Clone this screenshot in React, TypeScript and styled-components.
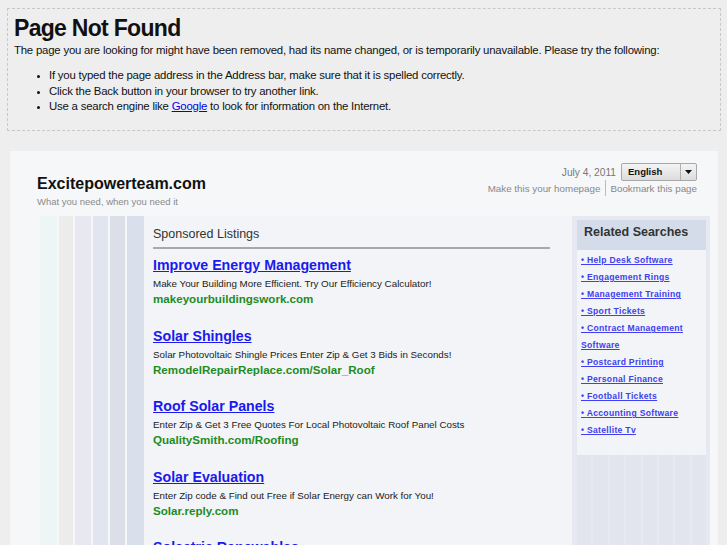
import React from "react";
import styled, { createGlobalStyle } from "styled-components";

const Global = createGlobalStyle`
  html, body { margin: 0; padding: 0; }
  body {
    background: #eeeeee;
    font-family: "Liberation Sans", Arial, sans-serif;
    width: 727px;
    height: 545px;
    overflow: hidden;
  }
`;

const Page = styled.div`
  padding: 8px 6px 0 7px;
`;

const ErrorBox = styled.div`
  border: 1px dashed #c8c8c8;
  padding: 5px 6px 12px 6px;
  height: 104px;
  color: #111;
`;

const ErrorTitle = styled.h1`
  margin: 0;
  font-size: 23px;
  font-weight: bold;
  letter-spacing: -0.7px;
  line-height: 28px;
`;

const ErrorText = styled.p`
  margin: 0;
  font-size: 11.4px;
  letter-spacing: -0.21px;
  line-height: 17px;
`;

const ErrorList = styled.ul`
  margin: 9px 0 0 0;
  padding-left: 35px;
  font-size: 11.4px;
  letter-spacing: -0.21px;
  line-height: 15.5px;
  li::marker { font-size: 9px; }
  a { color: #0000ee; }
`;

const Panel = styled.div`
  margin: 20px 3px 0 3px;
  background: #f6f7f9;
  height: 400px;
`;

const Header = styled.div`
  display: flex;
  justify-content: space-between;
  padding: 12px 21px 0 27px;
  height: 53px;
`;

const Brand = styled.div`
  padding-top: 10px;
`;

const SiteName = styled.div`
  font-size: 16px;
  font-weight: bold;
  color: #111;
  line-height: 22px;
`;

const Tagline = styled.div`
  font-size: 9.5px;
  color: #8a8a8a;
  line-height: 14px;
`;

const Tools = styled.div`
  display: flex;
  flex-direction: column;
  align-items: flex-end;
`;

const DateRow = styled.div`
  display: flex;
  align-items: center;
  gap: 5px;
  font-size: 10.2px;
  color: #777;
`;

const Select = styled.div`
  display: flex;
  width: 74px;
  height: 16px;
  border: 1px solid #a8a8a8;
  border-radius: 2px;
  background: linear-gradient(#f4f4f4, #dcdcdc);
  font-size: 9.5px;
  font-weight: bold;
  color: #111;
`;

const SelectLabel = styled.span`
  flex: 1;
  padding-left: 6px;
  line-height: 16px;
  border-right: 1px solid #b0b0b0;
`;

const SelectArrow = styled.span`
  width: 15px;
  display: flex;
  align-items: center;
  justify-content: center;
`;

const LinkRow = styled.div`
  display: flex;
  align-items: center;
  font-size: 9.8px;
  color: #888;
  margin-top: -1px;
`;

const Divider = styled.span`
  width: 1px;
  height: 16px;
  background: #bbb;
  margin: 0 4px 0 5px;
`;

const Body = styled.div`
  display: flex;
  height: 330px;
  padding: 0 8px 0 30px;
`;

const Stripes = styled.div`
  display: flex;
  width: 104px;
  gap: 2px;
`;

const Stripe = styled.div<{ $c: string; $w: number }>`
  width: ${(p) => p.$w}px;
  background: ${(p) => p.$c};
`;

const Main = styled.div`
  flex: 1;
  background: #f2f4f7;
  padding: 10px 22px 0 9px;
`;

const SectionTitle = styled.div`
  font-size: 12.5px;
  color: #333;
  line-height: 16px;
  padding-bottom: 5px;
  border-bottom: 2px solid #a8a8a8;
`;

const Listing = styled.div`
  margin-top: 7px;
  height: 63.5px;
`;

const AdTitle = styled.a`
  display: inline-block;
  font-size: 14.2px;
  font-weight: bold;
  color: #1a1aee;
  text-decoration: underline;
  line-height: 18px;
`;

const AdDesc = styled.div`
  font-size: 9.8px;
  color: #222;
  line-height: 16px;
  padding-top: 2px;
`;

const AdUrl = styled.div`
  font-size: 11.6px;
  font-weight: bold;
  color: #1e8c1e;
  line-height: 14px;
`;

const Sidebar = styled.div`
  width: 138px;
  background: #e6e9f1;
  padding: 4px 4px 0 5px;
  box-sizing: border-box;
  display: flex;
  flex-direction: column;
`;

const SideHead = styled.div`
  background: #d4dcea;
  height: 30px;
  padding-left: 7px;
  font-size: 12.5px;
  font-weight: bold;
  color: #333;
  line-height: 24px;
`;

const SideList = styled.div`
  background: #f2f4f8;
  padding: 2px 0 16px 4px;
  height: 187px;
`;

const SideLink = styled.a`
  display: block;
  font-size: 8.6px;
  font-weight: bold;
  color: #4040ee;
  text-decoration: underline;
  line-height: 17px;
  letter-spacing: 0.3px;
`;

const SideStripes = styled.div`
  flex: 1;
  display: flex;
  gap: 2px;
`;

const SideStripe = styled.div`
  flex: 1;
  background: #e2e5ee;
`;

const ads = [
  {
    t: "Improve Energy Management",
    d: "Make Your Building More Efficient. Try Our Efficiency Calculator!",
    u: "makeyourbuildingswork.com",
  },
  {
    t: "Solar Shingles",
    d: "Solar Photovoltaic Shingle Prices Enter Zip & Get 3 Bids in Seconds!",
    u: "RemodelRepairReplace.com/Solar_Roof",
  },
  {
    t: "Roof Solar Panels",
    d: "Enter Zip & Get 3 Free Quotes For Local Photovoltaic Roof Panel Costs",
    u: "QualitySmith.com/Roofing",
  },
  {
    t: "Solar Evaluation",
    d: "Enter Zip code & Find out Free if Solar Energy can Work for You!",
    u: "Solar.reply.com",
  },
  {
    t: "Solectric Renewables",
    d: "Solar Energy Systems for Homes and Businesses.",
    u: "www.solectric.com",
  },
];

const related = [
  "Help Desk Software",
  "Engagement Rings",
  "Management Training",
  "Sport Tickets",
  "Contract Management Software",
  "Postcard Printing",
  "Personal Finance",
  "Football Tickets",
  "Accounting Software",
  "Satellite Tv",
];

const stripes: [string, number][] = [
  ["#eef5f5", 17],
  ["#ececea", 15],
  ["#e8e8f2", 16],
  ["#e1e5ef", 15],
  ["#dcdee8", 16],
  ["#d9e0eb", 17],
];

export default function App() {
  return (
    <>
      <Global />
      <Page>
        <ErrorBox>
          <ErrorTitle>Page Not Found</ErrorTitle>
          <ErrorText>
            The page you are looking for might have been removed, had its name changed, or is
            temporarily unavailable. Please try the following:
          </ErrorText>
          <ErrorList>
            <li>If you typed the page address in the Address bar, make sure that it is spelled correctly.</li>
            <li>Click the Back button in your browser to try another link.</li>
            <li>
              Use a search engine like <a href="#">Google</a> to look for information on the Internet.
            </li>
          </ErrorList>
        </ErrorBox>
        <Panel>
          <Header>
            <Brand>
              <SiteName>Excitepowerteam.com</SiteName>
              <Tagline>What you need, when you need it</Tagline>
            </Brand>
            <Tools>
              <DateRow>
                July 4, 2011
                <Select>
                  <SelectLabel>English</SelectLabel>
                  <SelectArrow>
                    <svg width="7" height="4" viewBox="0 0 7 4">
                      <path d="M0 0h7L3.5 4z" fill="#111" />
                    </svg>
                  </SelectArrow>
                </Select>
              </DateRow>
              <LinkRow>
                Make this your homepage
                <Divider />
                Bookmark this page
              </LinkRow>
            </Tools>
          </Header>
          <Body>
            <Stripes>
              {stripes.map(([c, w], i) => (
                <Stripe key={i} $c={c} $w={w} />
              ))}
            </Stripes>
            <Main>
              <SectionTitle>Sponsored Listings</SectionTitle>
              {ads.map((a) => (
                <Listing key={a.t}>
                  <AdTitle href="#">{a.t}</AdTitle>
                  <AdDesc>{a.d}</AdDesc>
                  <AdUrl>{a.u}</AdUrl>
                </Listing>
              ))}
            </Main>
            <Sidebar>
              <SideHead>Related Searches</SideHead>
              <SideList>
                {related.map((r) => (
                  <SideLink href="#" key={r}>
                    • {r}
                  </SideLink>
                ))}
              </SideList>
              <SideStripes>
                {Array.from({ length: 8 }).map((_, i) => (
                  <SideStripe key={i} />
                ))}
              </SideStripes>
            </Sidebar>
          </Body>
        </Panel>
      </Page>
    </>
  );
}
